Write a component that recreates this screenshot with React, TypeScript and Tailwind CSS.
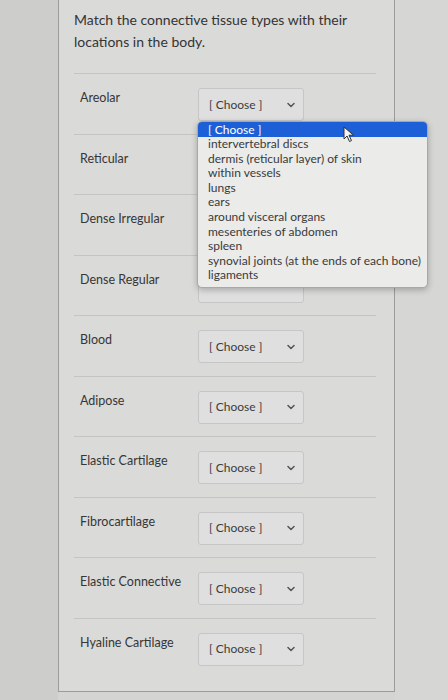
import * as React from "react";

const rows = [
  "Areolar",
  "Reticular",
  "Dense Irregular",
  "Dense Regular",
  "Blood",
  "Adipose",
  "Elastic Cartilage",
  "Fibrocartilage",
  "Elastic Connective",
  "Hyaline Cartilage",
];

const options = [
  "[ Choose ]",
  "intervertebral discs",
  "dermis (reticular layer) of skin",
  "within vessels",
  "lungs",
  "ears",
  "around visceral organs",
  "mesenteries of abdomen",
  "spleen",
  "synovial joints (at the ends of each bone)",
  "ligaments",
];

function Chevron() {
  return (
    <svg width="8" height="6" viewBox="0 0 8 6" className="text-[#555]">
      <path d="M1 1.5 L4 4.5 L7 1.5" fill="none" stroke="currentColor" strokeWidth="1.5" strokeLinecap="round" strokeLinejoin="round" />
    </svg>
  );
}

// selects under the open list are covered, so their contents are not drawn
function FakeSelect({ covered }: { covered?: boolean }) {
  return (
    <div className="mt-[14px] flex h-[33px] w-[106px] items-center justify-between rounded-[3px] border border-[#c6c6c6] bg-[#dfdfdf] pl-[10px] pr-[8px] text-[12px] text-[#3c3c3c]">
      {!covered && <span>[ Choose ]</span>}
      {!covered && <Chevron />}
    </div>
  );
}

export default function App() {
  return (
    <div
      className="relative flex h-[700px] w-[448px] overflow-hidden bg-[#d4d4d2]"
      style={{ fontFamily: "Lato, 'Open Sans', sans-serif" }}
    >
      {/* left strip */}
      <div className="h-full w-[58px] bg-[#cdcdcb]" />

      {/* quiz panel */}
      <div className="h-[692px] w-[337px] border-x border-b border-[#9c9c9a] bg-[#dadad8] pl-[15px] pr-[18px] pt-[9px]">
        <p className="text-[14px] leading-[22px] text-[#343434]">
          Match the connective tissue types with their locations in the body.
        </p>

        <div className="mt-[20px]">
          {rows.map((r, i) => (
            <div key={r} className="flex h-[60.5px] border-t border-[#c4c4c2]">
              <div className="w-[124px] pl-[6px] pt-[16px] text-[12.5px] leading-[16px] text-[#363636]">
                {r}
              </div>
              <FakeSelect covered={i >= 1 && i <= 3} />
            </div>
          ))}
        </div>
      </div>

      <div className="flex-1 bg-[#d6d6d4]" />

      {/* open dropdown list */}
      <div className="absolute left-[197px] top-[121px] w-[231px] overflow-hidden rounded-[5px] border border-[#a8a8a8] bg-[#ebebea] pb-[4px] shadow-[0_2px_6px_rgba(0,0,0,0.25)]">
        {options.map((o, i) => (
          <div
            key={o}
            className={
              i === 0
                ? "bg-[#1c5fd6] pl-[10px] text-[12px] leading-[15px] text-white"
                : "pl-[10px] text-[12px] leading-[14.6px] whitespace-nowrap text-[#3a3a3a]"
            }
          >
            {o}
          </div>
        ))}
      </div>

      {/* mouse cursor */}
      <svg className="absolute left-[343px] top-[126px]" width="12" height="17" viewBox="0 0 12 17">
        <path d="M1 1 L1 13 L4 10 L6.5 15.5 L8.5 14.6 L6 9.2 L10.5 9.2 Z" fill="#f4f4f4" stroke="#333" strokeWidth="1" strokeLinejoin="round" />
      </svg>
    </div>
  );
}
